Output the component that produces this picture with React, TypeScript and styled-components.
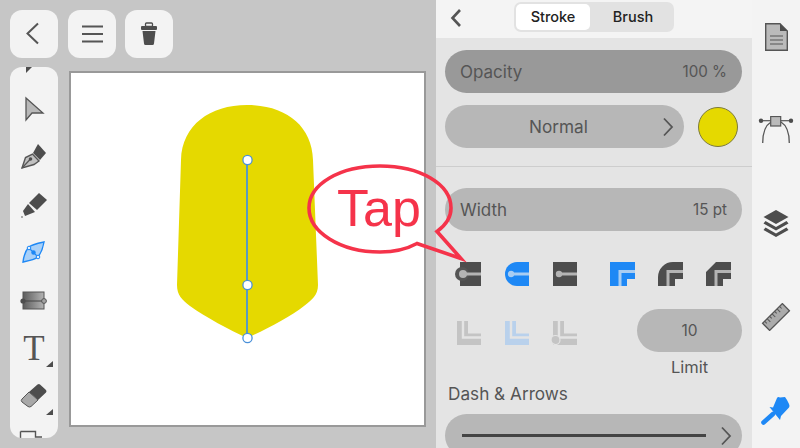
import styled, { createGlobalStyle } from 'styled-components';

const GlobalStyle = createGlobalStyle`
  html, body {
    margin: 0;
    padding: 0;
    background: #c6c6c6;
  }
  body {
    font-family: Inter, "Liberation Sans", sans-serif;
    color: #555;
  }
`;

const DARK = '#555';
const BLUE = '#1e88f5';

function Chevron() {
  return (
    <svg width="12" height="20" viewBox="0 0 12 20">
      <path d="M2 1.5 L10 10 L2 18.5" fill="none" stroke={DARK} strokeWidth="1.8" />
    </svg>
  );
}

function CapIcon({ kind, active }: { kind: 'round' | 'roundFill' | 'butt'; active?: boolean }) {
  const fill = active ? BLUE : '#4d4d4d';
  return (
    <svg width="30" height="24" viewBox="0 0 30 24">
      {kind === 'roundFill' ? (
        <path d="M27 0 V24 H15 A12 12 0 0 1 15 0 Z" fill={fill} />
      ) : (
        <rect x={kind === 'round' ? 6 : 3} y="0" width={kind === 'round' ? 21 : 24} height="24" fill={fill} />
      )}
      {kind === 'round' && <circle cx="8" cy="12" r="7" fill="#555" />}
      <line x1="9" y1="12" x2="27" y2="12" stroke={active ? '#a9cdf2' : '#b4b4b4'} strokeWidth="3" />
      <circle cx="9" cy="12" r={kind === 'round' ? 4 : 3.2} fill={active ? '#a9cdf2' : '#b4b4b4'} />
    </svg>
  );
}

function JoinIcon({ kind, active }: { kind: 'miter' | 'round' | 'bevel'; active?: boolean }) {
  const outer = {
    miter: 'M0 0 H25 V17 H17 V24 H0 Z',
    round: 'M0 24 V15 A15 15 0 0 1 15 0 H25 V17 H17 V24 Z',
    bevel: 'M0 24 V10 L10 0 H25 V17 H17 V24 Z',
  }[kind];
  return (
    <svg width="25" height="24" viewBox="0 0 25 24">
      <path d={outer} fill={active ? BLUE : '#4d4d4d'} />
      <path d="M25 9.5 H10 V24" fill="none" stroke={active ? '#a9cdf2' : '#b4b4b4'} strokeWidth="3" />
    </svg>
  );
}

function CornerIcon({ tone, dot }: { tone: string; dot?: boolean }) {
  return (
    <svg width="30" height="24" viewBox="0 0 30 24">
      <path d="M3 0 H14 V12.5 H27 V24 H3 Z" fill={tone} />
      <path d="M9 0 V16.5 H27" fill="none" stroke="#e4e4e4" strokeWidth="2.4" />
      {dot && <circle cx="5.5" cy="19" r="4.5" fill={tone} stroke="#e4e4e4" strokeWidth="1.2" />}
    </svg>
  );
}

const tools = [
  {
    id: 'clipped',
    icon: <polygon points="16,30 22,30 16,36" fill="#4d4d4d" />,
  },
  {
    id: 'arrow',
    icon: <polygon points="16,13 33,28 22,28 16,35" fill="#b8b8b8" stroke={DARK} strokeWidth="1.3" />,
  },
  {
    id: 'pen',
    icon: (
      <>
        <polygon points="28,11 36,20 30,27 23,20" fill="#4d4d4d" />
        <path d="M12 35 L15.5 24.5 L22.5 21 L29 28 L24 31.5 Z" fill="#c0c0c0" stroke={DARK} strokeWidth="1.4" />
        <line x1="12" y1="35" x2="20" y2="26.5" stroke={DARK} strokeWidth="1.2" />
        <circle cx="20.5" cy="26" r="1.8" fill="#4d4d4d" />
      </>
    ),
  },
  {
    id: 'marker',
    icon: (
      <>
        <polygon points="29,12 37,19 27,29 19,22" fill="#4d4d4d" />
        <polygon points="18,23 25,31 15,35 13,30" fill="#4d4d4d" />
        <circle cx="12" cy="36" r="0.8" fill="#4d4d4d" />
      </>
    ),
  },
  {
    id: 'shape',
    icon: (
      <>
        <path d="M13 33 C14 25 16 21 19 18 C23 15 29 14 34 13 C33 19 31 24 28 28 C24 31 18 32 13 33 Z" fill="#a8d0f8" stroke={BLUE} strokeWidth="1.4" />
        <line x1="19" y1="19" x2="28" y2="28" stroke={BLUE} strokeWidth="1.2" />
        <circle cx="19" cy="19" r="1.8" fill="#e4f0fd" stroke={BLUE} />
        <circle cx="28" cy="28" r="1.8" fill="#e4f0fd" stroke={BLUE} />
        <circle cx="23.5" cy="23.5" r="2.2" fill={BLUE} />
      </>
    ),
  },
  {
    id: 'gradient',
    icon: (
      <>
        <defs>
          <linearGradient id="toolGradient" x1="0" x2="1" y1="0" y2="0">
            <stop offset="0" stopColor="#5c5c5c" />
            <stop offset="1" stopColor="#b4b4b4" />
          </linearGradient>
        </defs>
        <rect x="13" y="15" width="21" height="17" fill="url(#toolGradient)" stroke={DARK} strokeWidth="1" />
        <line x1="13" y1="24" x2="34" y2="24" stroke="#444" strokeWidth="1" />
        <circle cx="13" cy="24" r="2.6" fill="#4d4d4d" />
        <circle cx="34" cy="24" r="2.4" fill="#a4a4a4" stroke={DARK} />
      </>
    ),
  },
  { id: 'text', letter: 'T', menu: true },
  {
    id: 'eraser',
    menu: true,
    icon: (
      <>
        <path d="M19 19 L27.5 11.5 Q29 10.5 30 11.5 L36 17 Q37 18 36 19.5 L28 27 Z" fill="#4d4d4d" />
        <path d="M19 19 L28 27 L21 33.5 Q19.5 34.5 18 33.5 L12 29 Q10.5 27.5 12 26 Z" fill="#a8a8a8" stroke={DARK} strokeWidth="1" />
      </>
    ),
  },
  {
    id: 'frame',
    icon: (
      <path d="M10.5 10.5 H25.5 V16 H32 M10.5 10.5 V36" fill="none" stroke={DARK} strokeWidth="1.4" />
    ),
  },
];

function DocIcon() {
  return (
    <svg width="48" height="28" viewBox="0 0 48 28">
      <path d="M13.7 .7 H28 L35.3 8 V27.3 H13.7 Z" fill="#bababa" stroke={DARK} strokeWidth="1.4" />
      <path d="M28 .7 L35.3 8 H28 Z" fill="#4d4d4d" />
      <path d="M18 13 H31 M18 17 H31 M18 21 H31" stroke={DARK} strokeWidth="1.1" />
    </svg>
  );
}

function NodeIcon() {
  return (
    <svg width="48" height="28" viewBox="0 0 48 28">
      <path d="M9 4.7 H39" stroke={DARK} strokeWidth="1.2" />
      <circle cx="9" cy="4.7" r="2.2" fill="#4d4d4d" />
      <circle cx="39" cy="4.7" r="2.2" fill="#4d4d4d" />
      <path d="M10.7 27 C10.7 15 14 9 19 6 M37.3 27 C37.3 15 34 9 29 6" fill="none" stroke={DARK} strokeWidth="1.3" />
      <rect x="18.7" y=".5" width="10" height="9.5" fill="#bababa" stroke={DARK} strokeWidth="1.2" />
    </svg>
  );
}

function LayersIcon() {
  return (
    <svg width="48" height="28" viewBox="0 0 48 28">
      <polygon points="24,0 36.5,7 24,14 11.5,7" fill="#4d4d4d" />
      <path d="M13.5 11 L24 17 L34.5 11 L36.5 13.5 L24 20.5 L11.5 13.5 Z" fill="#4d4d4d" />
      <path d="M13.5 17.5 L24 23.5 L34.5 17.5 L36.5 20 L24 27 L11.5 20 Z" fill="#4d4d4d" />
    </svg>
  );
}

function RulerIcon() {
  return (
    <svg width="48" height="28" viewBox="0 0 48 28">
      <g transform="rotate(-45 24 14)">
        <rect x="10" y="9" width="28" height="10" fill="#ababab" stroke={DARK} strokeWidth="1.3" />
        <path d="M13 9 V12 M16.5 9 V13.5 M20 9 V12 M23.5 9 V13.5 M27 9 V12 M30.5 9 V13.5 M34 9 V12" stroke={DARK} strokeWidth="1" />
      </g>
    </svg>
  );
}

function BrushIcon() {
  return (
    <svg width="48" height="29" viewBox="0 0 48 29">
      <line x1="11.5" y1="26.5" x2="21" y2="18" stroke={BLUE} strokeWidth="4.6" strokeLinecap="round" />
      <path d="M17.5 11 L21 11.5 L25 2 Q26 0.5 28 1.5 L33 1 L35 4 L37 8 Q38 10 37 11.5 L29 20 L28 24 Z" fill={BLUE} />
    </svg>
  );
}

export default function App() {
  return (
    <>
      <GlobalStyle />
      <Screen>
        <Workspace>
          <TopBar>
            <TileButton>
              <svg width="48" height="48" viewBox="0 0 48 48">
                <path d="M28 13.5 L17.5 23.5 L28 33.5" fill="none" stroke={DARK} strokeWidth="2" />
              </svg>
            </TileButton>
            <TileButton>
              <svg width="48" height="48" viewBox="0 0 48 48">
                <path d="M14 16.5 H35 M14 24 H35 M14 31.5 H35" stroke={DARK} strokeWidth="2.2" />
              </svg>
            </TileButton>
            <TileButton>
              <svg width="48" height="48" viewBox="0 0 48 48">
                <rect x="20.5" y="13" width="7" height="3.5" rx="1" fill="none" stroke="#4d4d4d" strokeWidth="1.3" />
                <rect x="16" y="16" width="16" height="4" rx="1" fill="#4d4d4d" />
                <path d="M17.5 21 H30.5 L29 33.5 Q28.9 35 27.5 35 H20.5 Q19.1 35 19 33.5 Z" fill="#4d4d4d" />
              </svg>
            </TileButton>
          </TopBar>
          <MainRow>
            <Palette>
              <ToolList>
                {tools.map((tool) => (
                  <Tool key={tool.id}>
                    {tool.letter ? (
                      <ToolLetter>{tool.letter}</ToolLetter>
                    ) : (
                      <svg width="48" height="48" viewBox="0 0 48 48">
                        {tool.icon}
                      </svg>
                    )}
                    {tool.menu && <MenuMark />}
                  </Tool>
                ))}
              </ToolList>
            </Palette>
            <Canvas>
              <svg width="100%" height="100%" viewBox="71 73 353 352">
                <path
                  d="M247 105 C210 105 182 125 181 160 L177 285 C177 295 182 300 190 306 C205 317 230 330 247 338 C265 330 290 317 304 306 C312 300 318 295 318 285 L313 160 C312 125 285 105 247 105 Z"
                  fill="#e5d900"
                />
                <line x1="247" y1="160" x2="247" y2="338" stroke="#5a9bbf" strokeWidth="2" />
                <circle cx="247.5" cy="160" r="4.6" fill="#fff" stroke="#4a90d9" strokeWidth="1.3" />
                <circle cx="247.5" cy="285" r="4.6" fill="#fff" stroke="#4a90d9" strokeWidth="1.3" />
                <circle cx="247.5" cy="338" r="4.6" fill="#fff" stroke="#4a90d9" strokeWidth="1.3" />
              </svg>
            </Canvas>
          </MainRow>
        </Workspace>

        <Panel>
          <PanelHeader>
            <BackButton>
              <svg width="14" height="20" viewBox="0 0 14 20">
                <path d="M11 2 L3.5 10 L11 18" fill="none" stroke={DARK} strokeWidth="2.6" />
              </svg>
            </BackButton>
            <Segments>
              <Segment $active>Stroke</Segment>
              <Segment>Brush</Segment>
            </Segments>
          </PanelHeader>
          <PanelBody>
            <BlendSection>
              <Pill $tone="#999">
                <PillLabel>Opacity</PillLabel>
                <PillValue>100 %</PillValue>
              </Pill>
              <BlendRow>
                <Pill $chevron>
                  <PillCenter>Normal</PillCenter>
                  <Chevron />
                </Pill>
                <ColorWell />
              </BlendRow>
            </BlendSection>
            <StrokeSection>
              <Pill>
                <PillLabel>Width</PillLabel>
                <PillValue>15 pt</PillValue>
              </Pill>
              <IconRow>
                <IconGroup>
                  <IconCell><CapIcon kind="round" /></IconCell>
                  <IconCell><CapIcon kind="roundFill" active /></IconCell>
                  <IconCell><CapIcon kind="butt" /></IconCell>
                </IconGroup>
                <IconGroup>
                  <IconCell><JoinIcon kind="miter" active /></IconCell>
                  <IconCell><JoinIcon kind="round" /></IconCell>
                  <IconCell><JoinIcon kind="bevel" /></IconCell>
                </IconGroup>
              </IconRow>
              <LimitRow>
                <CornerGroup>
                  <IconCell><CornerIcon tone="#c4c4c4" /></IconCell>
                  <IconCell><CornerIcon tone="#b9d1ec" /></IconCell>
                  <IconCell><CornerIcon tone="#c4c4c4" dot /></IconCell>
                </CornerGroup>
                <LimitBox>
                  <Pill>
                    <PillCenter $small>10</PillCenter>
                  </Pill>
                  <LimitLabel>Limit</LimitLabel>
                </LimitBox>
              </LimitRow>
              <SectionTitle>Dash &amp; Arrows</SectionTitle>
              <Pill $chevron>
                <DashLine />
                <Chevron />
              </Pill>
            </StrokeSection>
          </PanelBody>
        </Panel>

        <Rail>
          <DocIcon />
          <NodeIcon />
          <LayersIcon />
          <RulerIcon />
          <BrushIcon />
        </Rail>

        <Callout>
          <svg width="170" height="110" viewBox="300 160 170 110">
            <path
              d="M417 243.5 C405 250 392 252 380 252 C340 252 309 232 309 208 C309 184 340 166 380 166 C420 166 451 184 451 208 C451 217 446 225 437 231.5 L461 258.5 Z"
              fill="none"
              stroke="#f5334a"
              strokeWidth="3.6"
              strokeLinejoin="miter"
            />
          </svg>
          <CalloutText>Tap</CalloutText>
        </Callout>
      </Screen>
    </>
  );
}

const Screen = styled.div`
  position: relative;
  display: flex;
  width: 800px;
  height: 448px;
  overflow: hidden;
  background: #c6c6c6;
`;

const Workspace = styled.section`
  display: flex;
  flex-direction: column;
  flex: 0 0 436px;
  padding: 10px 0 0 10px;
  box-sizing: border-box;
`;

const TopBar = styled.div`
  display: flex;
  column-gap: 9.5px;
  height: 48px;
`;

const TileButton = styled.button`
  display: block;
  width: 48px;
  height: 48px;
  padding: 0;
  border: 0;
  border-radius: 12px;
  background: #f3f3f3;
`;

const MainRow = styled.div`
  display: flex;
  align-items: flex-start;
  column-gap: 11px;
  margin-top: 9px;
`;

const Palette = styled.nav`
  width: 48px;
  height: 371px;
  overflow: hidden;
  border-radius: 12px;
  background: #f3f3f3;
`;

const ToolList = styled.div`
  display: flex;
  flex-direction: column;
  margin-top: -30px;
`;

const Tool = styled.div`
  position: relative;
  flex: 0 0 48px;
  height: 48px;
  text-align: center;

  svg {
    display: block;
  }
`;

const ToolLetter = styled.span`
  display: block;
  font-family: "Liberation Serif", serif;
  font-size: 35px;
  line-height: 48px;
  color: #555;
`;

const MenuMark = styled.i`
  position: absolute;
  left: 36px;
  top: 36px;
  width: 7px;
  height: 6px;
  background: #4d4d4d;
  clip-path: polygon(100% 0, 100% 100%, 0 100%);
`;

const Canvas = styled.div`
  width: 357px;
  height: 356px;
  margin-top: 4px;
  box-sizing: border-box;
  border: 2px solid #999;
  background: #fff;

  svg {
    display: block;
  }
`;

const Panel = styled.section`
  display: flex;
  flex-direction: column;
  flex: 0 0 316px;
  background: #e4e4e4;
`;

const PanelHeader = styled.header`
  position: relative;
  display: flex;
  justify-content: flex-start;
  align-items: center;
  height: 38px;
  padding-left: 78px;
  box-sizing: border-box;
  background: #f4f4f4;
`;

const BackButton = styled.div`
  position: absolute;
  left: 13px;
  top: 8px;
  line-height: 0;
`;

const Segments = styled.div`
  display: flex;
  width: 160px;
  height: 30px;
  margin-top: -4px;
  padding: 2px;
  box-sizing: border-box;
  border-radius: 7px;
  background: #e2e2e2;
`;

const Segment = styled.div<{ $active?: boolean }>`
  flex: 0 0 ${(p) => (p.$active ? '74px' : '82px')};
  padding-left: ${(p) => (p.$active ? '0' : '4px')};
  box-sizing: border-box;
  border-radius: 5px;
  background: ${(p) => (p.$active ? '#fff' : 'transparent')};
  font-size: 14.5px;
  font-weight: 500;
  line-height: 26px;
  text-align: center;
  color: #222;
`;

const PanelBody = styled.div`
  flex: 1;
  min-height: 0;
`;

const BlendSection = styled.div`
  display: flex;
  flex-direction: column;
  row-gap: 12px;
  padding: 12px 10px 18px 9px;
  border-bottom: 1px solid #cdcdcd;
`;

const Pill = styled.div<{ $tone?: string; $chevron?: boolean }>`
  display: flex;
  flex: 1 0 auto;
  align-items: center;
  justify-content: space-between;
  height: 43px;
  padding: 0 ${(p) => (p.$chevron ? '10px' : '15px')} 0 15px;
  box-sizing: border-box;
  border-radius: 22px;
  background: ${(p) => p.$tone ?? '#b7b7b7'};
`;

const PillLabel = styled.span`
  font-size: 17px;
  color: #555;
`;

const PillValue = styled.span`
  font-size: 15.2px;
  color: #555;
`;

const PillCenter = styled.span<{ $small?: boolean }>`
  flex: 1;
  padding-right: ${(p) => (p.$small ? '0' : '5px')};
  font-size: ${(p) => (p.$small ? '15.5px' : '17.2px')};
  text-align: center;
  color: #555;
`;

const BlendRow = styled.div`
  display: flex;
  align-items: center;
  column-gap: 14px;
  padding-right: 4px;
`;

const ColorWell = styled.div`
  flex: 0 0 40px;
  height: 40px;
  box-sizing: border-box;
  border: 1px solid #7c7a3c;
  border-radius: 50%;
  background: #e5d900;
`;

const StrokeSection = styled.div`
  display: flex;
  flex-direction: column;
  padding: 21px 10px 0 9px;
`;

const IconRow = styled.div`
  display: flex;
  justify-content: space-between;
  margin-top: 31px;
`;

const IconGroup = styled.div`
  display: flex;
  width: 144px;
`;

const CornerGroup = styled(IconGroup)`
  margin-top: 12px;
`;

const IconCell = styled.div`
  display: flex;
  flex: 0 0 48px;
  justify-content: center;
  height: 24px;

  svg {
    display: block;
  }
`;

const LimitRow = styled.div`
  display: flex;
  justify-content: space-between;
  align-items: flex-start;
  margin-top: 23px;
`;

const LimitBox = styled.div`
  display: flex;
  flex: 0 0 105px;
  flex-direction: column;
`;

const LimitLabel = styled.div`
  margin-top: 5px;
  font-size: 16.5px;
  line-height: 20px;
  text-align: center;
  color: #555;
`;

const SectionTitle = styled.h3`
  margin: 7px 0 10px 3px;
  font-size: 17.2px;
  font-weight: 400;
  line-height: 20px;
  color: #555;
`;

const DashLine = styled.div`
  flex: 1;
  height: 2.5px;
  margin: 0 14px 0 2px;
  background: #444;
`;

const Rail = styled.aside`
  display: flex;
  flex: 0 0 48px;
  flex-direction: column;
  justify-content: space-between;
  padding: 23px 0;
  box-sizing: border-box;
  background: #f3f3f3;

  svg {
    display: block;
  }
`;

const Callout = styled.div`
  position: absolute;
  left: 300px;
  top: 160px;
  width: 170px;
  height: 110px;

  svg {
    display: block;
  }
`;

const CalloutText = styled.span`
  position: absolute;
  left: 37px;
  top: 19px;
  font-family: "Liberation Sans", sans-serif;
  font-size: 52px;
  line-height: 58px;
  color: #f5334a;
`;
